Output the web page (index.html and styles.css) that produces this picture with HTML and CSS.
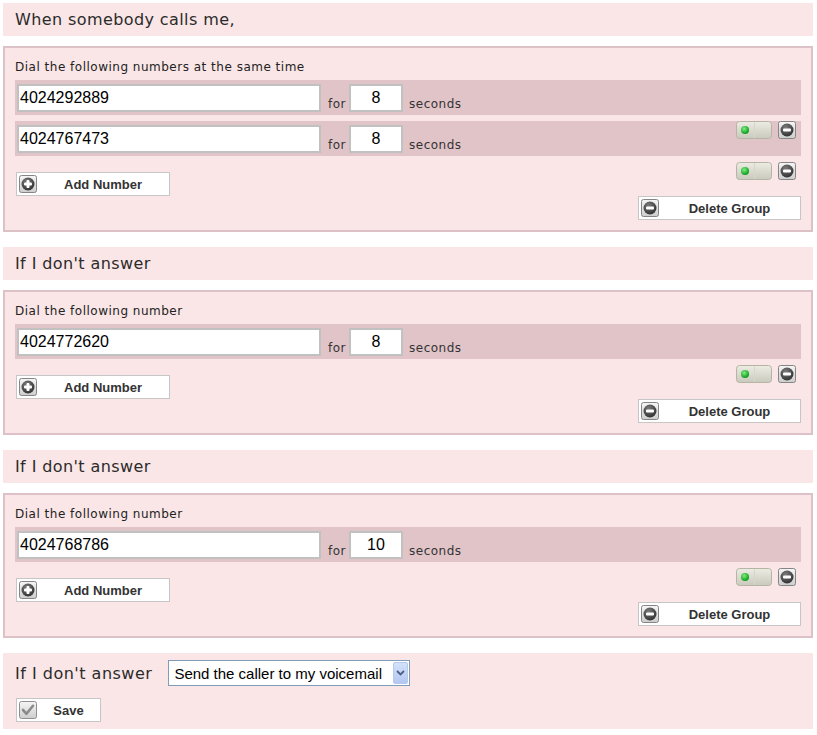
FILE: index.html
```html
<!DOCTYPE html>
<html>
<head>
<meta charset="utf-8">
<title>Call forwarding</title>
<link rel="stylesheet" href="styles.css">
</head>
<body>
<div class="page">

  <div class="section-head">When somebody calls me,</div>
  <div class="group">
    <div class="caption">Dial the following numbers at the same time</div>
    <div class="row">
      <input class="num" type="text" value="4024292889">
      <span class="lbl for">for</span>
      <input class="secs" type="text" value="8">
      <span class="lbl">seconds</span>
      <div class="ctrls">
        <svg class="toggle" width="36" height="18" viewBox="0 0 36 18"><defs><linearGradient id="tg" x1="0" y1="0" x2="0" y2="1"><stop offset="0" stop-color="#ecece3"/><stop offset="1" stop-color="#c9c9bd"/></linearGradient><radialGradient id="gr" cx="0.4" cy="0.35" r="0.65"><stop offset="0" stop-color="#7ef07e"/><stop offset="1" stop-color="#0a9a1a"/></radialGradient></defs><rect x="0.5" y="0.5" width="35" height="17" rx="3" fill="url(#tg)" stroke="#b5b5a6"/><line x1="18.5" y1="1" x2="18.5" y2="17" stroke="#d6d6cc"/><circle cx="9" cy="9" r="4" fill="url(#gr)"/></svg>
        <svg class="ico" width="18" height="18" viewBox="0 0 18 18"><defs><linearGradient id="ib" x1="0" y1="0" x2="0" y2="1"><stop offset="0" stop-color="#f6f6f6"/><stop offset="1" stop-color="#cdcdcd"/></linearGradient><radialGradient id="ball" cx="0.4" cy="0.3" r="0.75"><stop offset="0" stop-color="#7a7a7a"/><stop offset="1" stop-color="#2e2e2e"/></radialGradient></defs><rect x="0.5" y="0.5" width="17" height="17" rx="2" fill="url(#ib)" stroke="#858585"/><circle cx="9" cy="9" r="6.5" fill="url(#ball)"/><rect x="5" y="7.5" width="8" height="3" rx="1" fill="#fff"/></svg>
      </div>
    </div>
    <div class="row">
      <input class="num" type="text" value="4024767473">
      <span class="lbl for">for</span>
      <input class="secs" type="text" value="8">
      <span class="lbl">seconds</span>
      <div class="ctrls">
        <svg class="toggle" width="36" height="18" viewBox="0 0 36 18"><rect x="0.5" y="0.5" width="35" height="17" rx="3" fill="url(#tg)" stroke="#b5b5a6"/><line x1="18.5" y1="1" x2="18.5" y2="17" stroke="#d6d6cc"/><circle cx="9" cy="9" r="4" fill="url(#gr)"/></svg>
        <svg class="ico" width="18" height="18" viewBox="0 0 18 18"><rect x="0.5" y="0.5" width="17" height="17" rx="2" fill="url(#ib)" stroke="#858585"/><circle cx="9" cy="9" r="6.5" fill="url(#ball)"/><rect x="5" y="7.5" width="8" height="3" rx="1" fill="#fff"/></svg>
      </div>
    </div>
    <div class="actions">
      <button class="btn add" type="button"><svg class="ico" width="18" height="18" viewBox="0 0 18 18"><rect x="0.5" y="0.5" width="17" height="17" rx="2" fill="url(#ib)" stroke="#858585"/><circle cx="9" cy="9" r="6.5" fill="url(#ball)"/><rect x="5" y="7.5" width="8" height="3" rx="1" fill="#fff"/><rect x="7.5" y="5" width="3" height="8" rx="1" fill="#fff"/></svg><span class="btn-text">Add Number</span></button>
      <button class="btn del" type="button"><svg class="ico" width="18" height="18" viewBox="0 0 18 18"><rect x="0.5" y="0.5" width="17" height="17" rx="2" fill="url(#ib)" stroke="#858585"/><circle cx="9" cy="9" r="6.5" fill="url(#ball)"/><rect x="5" y="7.5" width="8" height="3" rx="1" fill="#fff"/></svg><span class="btn-text">Delete Group</span></button>
    </div>
  </div>

  <div class="section-head">If I don't answer</div>
  <div class="group">
    <div class="caption">Dial the following number</div>
    <div class="row">
      <input class="num" type="text" value="4024772620">
      <span class="lbl for">for</span>
      <input class="secs" type="text" value="8">
      <span class="lbl">seconds</span>
      <div class="ctrls">
        <svg class="toggle" width="36" height="18" viewBox="0 0 36 18"><rect x="0.5" y="0.5" width="35" height="17" rx="3" fill="url(#tg)" stroke="#b5b5a6"/><line x1="18.5" y1="1" x2="18.5" y2="17" stroke="#d6d6cc"/><circle cx="9" cy="9" r="4" fill="url(#gr)"/></svg>
        <svg class="ico" width="18" height="18" viewBox="0 0 18 18"><rect x="0.5" y="0.5" width="17" height="17" rx="2" fill="url(#ib)" stroke="#858585"/><circle cx="9" cy="9" r="6.5" fill="url(#ball)"/><rect x="5" y="7.5" width="8" height="3" rx="1" fill="#fff"/></svg>
      </div>
    </div>
    <div class="actions">
      <button class="btn add" type="button"><svg class="ico" width="18" height="18" viewBox="0 0 18 18"><rect x="0.5" y="0.5" width="17" height="17" rx="2" fill="url(#ib)" stroke="#858585"/><circle cx="9" cy="9" r="6.5" fill="url(#ball)"/><rect x="5" y="7.5" width="8" height="3" rx="1" fill="#fff"/><rect x="7.5" y="5" width="3" height="8" rx="1" fill="#fff"/></svg><span class="btn-text">Add Number</span></button>
      <button class="btn del" type="button"><svg class="ico" width="18" height="18" viewBox="0 0 18 18"><rect x="0.5" y="0.5" width="17" height="17" rx="2" fill="url(#ib)" stroke="#858585"/><circle cx="9" cy="9" r="6.5" fill="url(#ball)"/><rect x="5" y="7.5" width="8" height="3" rx="1" fill="#fff"/></svg><span class="btn-text">Delete Group</span></button>
    </div>
  </div>

  <div class="section-head">If I don't answer</div>
  <div class="group">
    <div class="caption">Dial the following number</div>
    <div class="row">
      <input class="num" type="text" value="4024768786">
      <span class="lbl for">for</span>
      <input class="secs" type="text" value="10">
      <span class="lbl">seconds</span>
      <div class="ctrls">
        <svg class="toggle" width="36" height="18" viewBox="0 0 36 18"><rect x="0.5" y="0.5" width="35" height="17" rx="3" fill="url(#tg)" stroke="#b5b5a6"/><line x1="18.5" y1="1" x2="18.5" y2="17" stroke="#d6d6cc"/><circle cx="9" cy="9" r="4" fill="url(#gr)"/></svg>
        <svg class="ico" width="18" height="18" viewBox="0 0 18 18"><rect x="0.5" y="0.5" width="17" height="17" rx="2" fill="url(#ib)" stroke="#858585"/><circle cx="9" cy="9" r="6.5" fill="url(#ball)"/><rect x="5" y="7.5" width="8" height="3" rx="1" fill="#fff"/></svg>
      </div>
    </div>
    <div class="actions">
      <button class="btn add" type="button"><svg class="ico" width="18" height="18" viewBox="0 0 18 18"><rect x="0.5" y="0.5" width="17" height="17" rx="2" fill="url(#ib)" stroke="#858585"/><circle cx="9" cy="9" r="6.5" fill="url(#ball)"/><rect x="5" y="7.5" width="8" height="3" rx="1" fill="#fff"/><rect x="7.5" y="5" width="3" height="8" rx="1" fill="#fff"/></svg><span class="btn-text">Add Number</span></button>
      <button class="btn del" type="button"><svg class="ico" width="18" height="18" viewBox="0 0 18 18"><rect x="0.5" y="0.5" width="17" height="17" rx="2" fill="url(#ib)" stroke="#858585"/><circle cx="9" cy="9" r="6.5" fill="url(#ball)"/><rect x="5" y="7.5" width="8" height="3" rx="1" fill="#fff"/></svg><span class="btn-text">Delete Group</span></button>
    </div>
  </div>

  <div class="final">
    <div class="final-row">
      <span class="final-q">If I don't answer</span>
      <div class="select-wrap">
        <select class="select">
          <option>Send the caller to my voicemail</option>
        </select>
        <span class="select-arrow"><svg width="9" height="6" viewBox="0 0 9 6"><path d="M1 1 L4.5 4.5 L8 1" fill="none" stroke="#4d6185" stroke-width="1.8"/></svg></span>
      </div>
    </div>
    <button class="btn save" type="button"><svg class="ico" width="18" height="18" viewBox="0 0 18 18"><rect x="0.5" y="0.5" width="17" height="17" rx="2" fill="url(#ib)" stroke="#8f8f8f"/><path d="M4 9 L7.5 12.8 L14 4.8" fill="none" stroke="#8a8a8a" stroke-width="2.6" stroke-linecap="round" stroke-linejoin="round"/></svg><span class="btn-text">Save</span></button>
  </div>

</div>
</body>
</html>
```

FILE: styles.css
```css
html, body {
  background: #ffffff;
}
body {
  margin: 3px;
  font-family: "DejaVu Sans", Verdana, sans-serif;
  color: #333;
}
.page {
  width: 810px;
}
.section-head {
  background: #fae6e7;
  height: 33px;
  padding-left: 12px;
  display: flex;
  align-items: center;
  font-size: 16px;
  letter-spacing: 0.4px;
  color: #2b2b2b;
}
.group {
  position: relative;
  background: #fae6e7;
  border: 2px solid #dcc2c6;
  padding: 10px;
  margin: 10px 0 15px;
}
.caption {
  font-size: 12px;
  letter-spacing: 0.5px;
  line-height: 18px;
  height: 18px;
  margin-bottom: 4px;
  color: #222;
}
.row {
  position: relative;
  display: flex;
  align-items: flex-start;
  background: #e1c4c8;
  height: 35px;
  box-sizing: border-box;
  padding: 4px 0 0 2px;
  margin-bottom: 6px;
}
.num,
.secs {
  box-sizing: border-box;
  height: 28px;
  border: 2px solid #c1c1c1;
  background: #fff;
  font-family: "Liberation Sans", Arial, sans-serif;
  font-size: 16px;
  color: #000;
  margin: 0;
  outline: none;
}
.num {
  width: 304px;
  padding: 0 0 0 1px;
}
.secs {
  width: 54px;
  padding: 0;
  text-align: center;
}
.lbl {
  font-size: 12px;
  letter-spacing: 0.5px;
  line-height: 14px;
  margin-top: 13px;
  color: #333;
}
.for {
  margin-left: 7px;
  margin-right: 3px;
}
.secs + .lbl {
  margin-left: 6px;
}
.ctrls {
  position: absolute;
  z-index: 1;
  top: 41px;
  right: 5px;
  display: flex;
  gap: 6px;
}
.ctrls svg,
.btn svg {
  display: block;
}
.actions {
  display: flex;
  flex-direction: column;
  margin-top: 16px;
}
.btn {
  display: flex;
  align-items: center;
  box-sizing: border-box;
  height: 24px;
  background: #fff;
  border: 1px solid #c6c6c6;
  padding: 0 0 0 2px;
  margin: 0;
  font-family: "Liberation Sans", Arial, sans-serif;
  font-weight: bold;
  font-size: 13px;
  color: #333;
  cursor: pointer;
}
.btn-text {
  flex: 1;
  text-align: center;
}
.add {
  width: 154px;
  margin-left: 1px;
}
.del {
  width: 163px;
  align-self: flex-end;
}
.final {
  background: #fae6e7;
  padding: 7px 0 7px 12px;
}
.final-row {
  display: flex;
  align-items: center;
  height: 26px;
}
.final-q {
  font-size: 16px;
  letter-spacing: 0.5px;
  color: #2b2b2b;
}
.select-wrap {
  position: relative;
  margin-left: 16px;
  width: 242px;
  height: 26px;
}
.select {
  appearance: none;
  -webkit-appearance: none;
  box-sizing: border-box;
  width: 242px;
  height: 26px;
  border: 1px solid #7f9db9;
  border-radius: 0;
  background: #fff;
  padding: 0 0 0 5px;
  font-family: "Liberation Sans", Arial, sans-serif;
  font-size: 15px;
  color: #000;
  margin: 0;
}
.select-arrow {
  position: absolute;
  top: 2px;
  right: 2px;
  bottom: 2px;
  width: 15px;
  box-sizing: border-box;
  border: 1px solid #b7c9ea;
  border-radius: 2px;
  background: linear-gradient(#d3e1fb, #b3c7f0);
  display: flex;
  align-items: center;
  justify-content: center;
  pointer-events: none;
}
.save {
  width: 85px;
  margin: 12px 0 0 1px;
}
```
